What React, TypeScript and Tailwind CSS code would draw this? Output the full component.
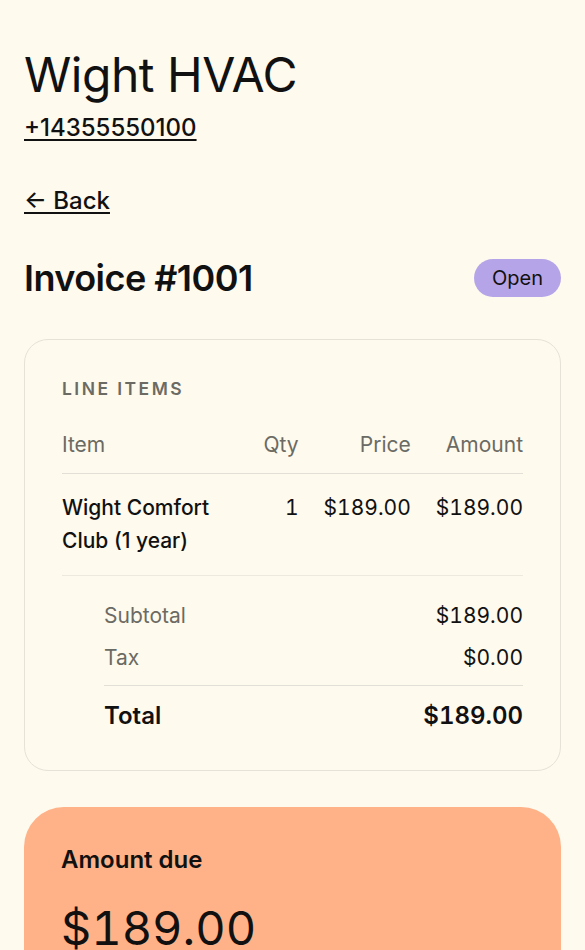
import React from "react";

const head = "border-b border-[#e2dfd6] pb-[12px] text-right text-[#6b6a63] pl-[25px]";
const cell = "border-b border-[#ede9df] pb-[18px] pt-[17px] text-right pl-[25px] tabular-nums";

export default function App() {
  return (
    <div
      className="min-h-[950px] bg-[#fefaee] px-6 pt-[46px] text-[#111111]"
      style={{ fontFamily: "Inter, 'Noto Sans', sans-serif" }}
    >
      <h1 className="text-[48px] font-normal leading-[1.2] tracking-[-0.01em]">Wight HVAC</h1>
      <a className="mt-[8px] block text-[24px] font-medium leading-[32px] underline underline-offset-[3px]">
        +14355550100
      </a>
      <a className="mt-[41px] block text-[24px] font-medium leading-[32px] underline underline-offset-[3px]">
        ← Back
      </a>
      <div className="mt-[39px] flex items-center justify-between">
        <h2 className="text-[36px] font-semibold leading-[44px] tracking-[-0.015em]">Invoice #1001</h2>
        <span className="flex h-[38px] items-center rounded-full bg-[#b6a4e8] px-[18px] text-[20px] font-normal">
          Open
        </span>
      </div>
      <div className="mt-[39px] rounded-[24px] border border-[#e6e2d8] px-[37px] pb-[40px] pt-[37px]">
        <div className="text-[17.5px] font-semibold uppercase leading-[24px] tracking-[0.14em] text-[#6b6a63]">
          Line items
        </div>
        <div className="mt-[27px] grid grid-cols-[1fr_auto_auto_auto] text-[21px] leading-[33px]">
          <div className="border-b border-[#e2dfd6] pb-[12px] text-[#6b6a63]">Item</div>
          <div className={head}>Qty</div>
          <div className={head}>Price</div>
          <div className={head}>Amount</div>
          <div className="border-b border-[#ede9df] pb-[18px] pt-[17px] font-medium">
            Wight Comfort Club (1 year)
          </div>
          <div className={cell}>1</div>
          <div className={cell}>$189.00</div>
          <div className={cell}>$189.00</div>
        </div>
        <div className="ml-[42px] mt-[26px] text-[21px] tabular-nums">
          <div className="flex justify-between leading-[28px]">
            <span className="text-[#6b6a63]">Subtotal</span>
            <span>$189.00</span>
          </div>
          <div className="mt-[14px] flex justify-between leading-[28px]">
            <span className="text-[#6b6a63]">Tax</span>
            <span>$0.00</span>
          </div>
          <div className="mt-[13px] flex justify-between border-t border-[#e2dfd6] pt-[16px] text-[24px] font-semibold leading-[28px]">
            <span>Total</span>
            <span>$189.00</span>
          </div>
        </div>
      </div>
      <div className="mt-[36px] rounded-[40px] bg-[#ffb187] px-[37px] pb-[40px] pt-[38px]">
        <div className="text-[24px] font-semibold leading-[30px]">Amount due</div>
        <div className="mt-[25px] text-[47px] font-normal leading-[56px] tabular-nums">$189.00</div>
      </div>
    </div>
  );
}
